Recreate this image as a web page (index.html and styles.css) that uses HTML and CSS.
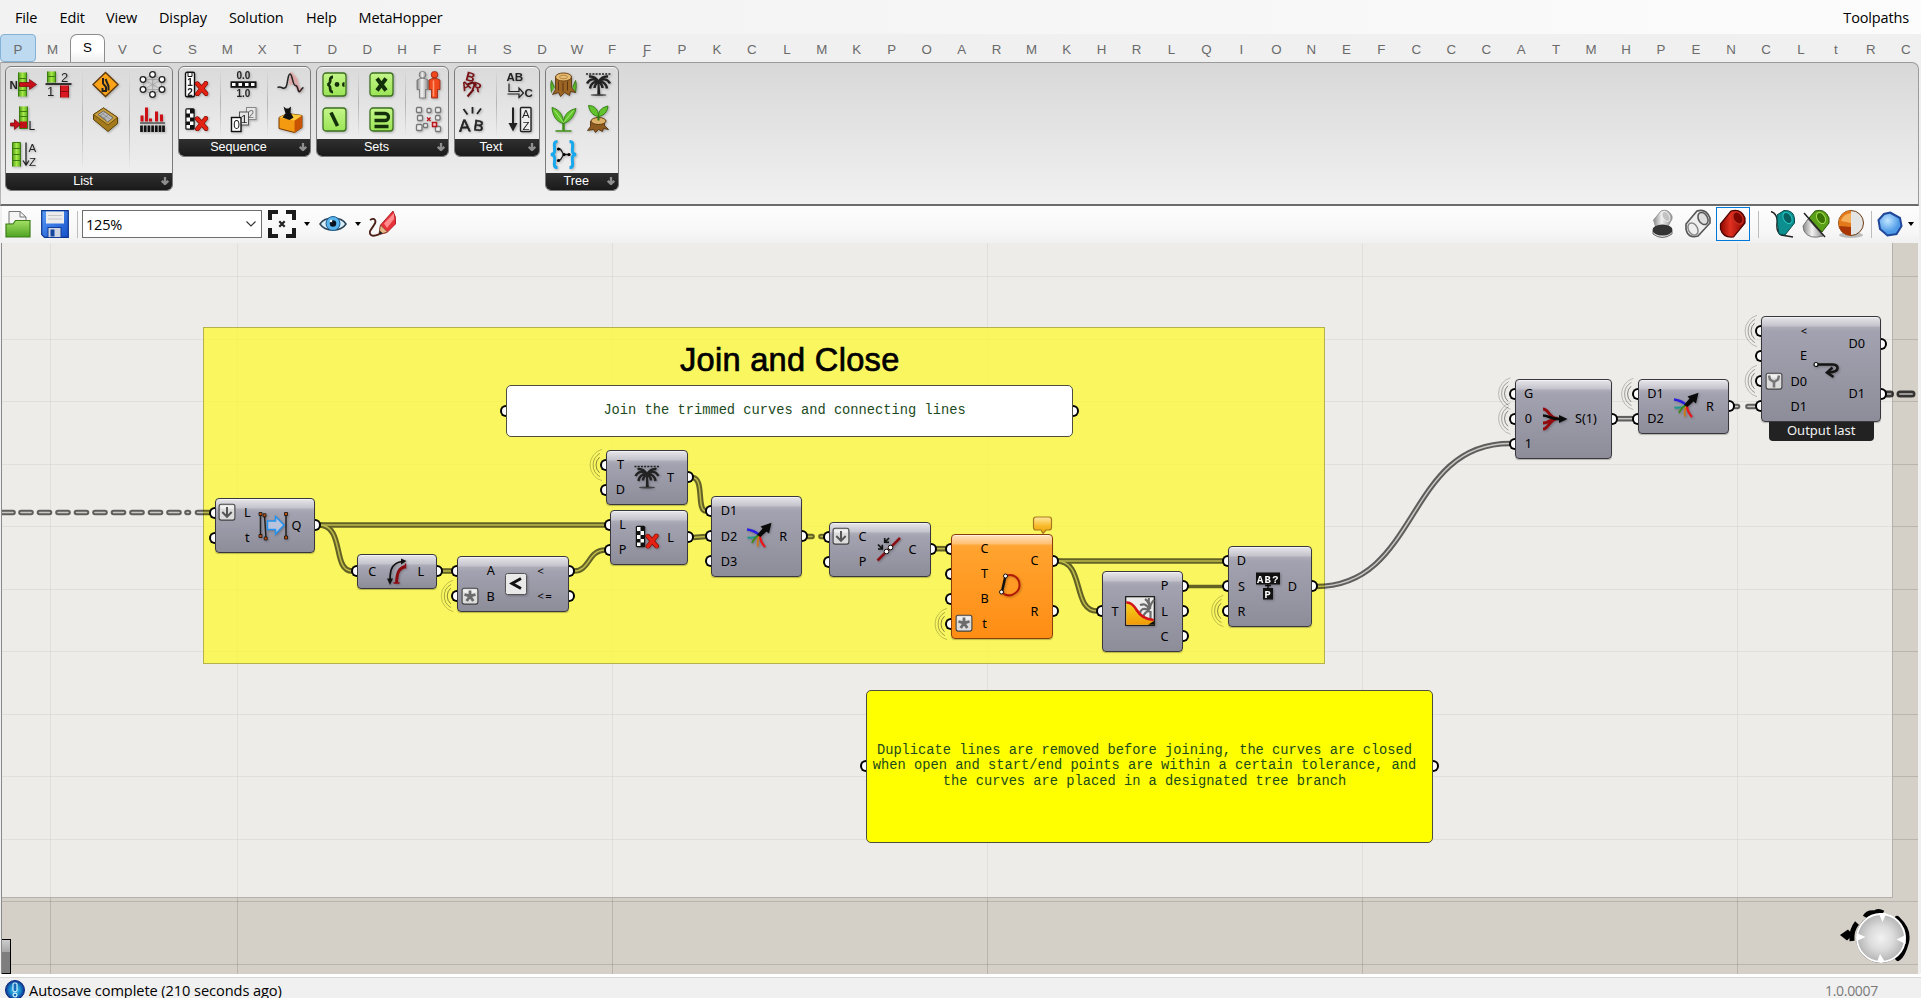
FILE: index.html
```html
<!DOCTYPE html>
<html lang="en">
<head>
<meta charset="utf-8">
<title>Toolpaths</title>
<link rel="stylesheet" href="styles.css">
</head>
<body>
<svg class="defs" aria-hidden="true">
  <defs>
    <linearGradient id="gGreen" x1="0" x2="1"><stop offset="0" stop-color="#4f9a16"/><stop offset=".5" stop-color="#a6ea48"/><stop offset="1" stop-color="#5aaa1c"/></linearGradient>
    <linearGradient id="gLime" x1="0" y1="0" x2="0" y2="1"><stop offset="0" stop-color="#c4f58a"/><stop offset="1" stop-color="#9be455"/></linearGradient>
    <linearGradient id="gFolder" x1="0" y1="0" x2="0" y2="1"><stop offset="0" stop-color="#a5e065"/><stop offset="1" stop-color="#4ea322"/></linearGradient>
    <linearGradient id="gDisk" x1="0" y1="0" x2="1" y2="1"><stop offset="0" stop-color="#5a9cf8"/><stop offset="1" stop-color="#1550c8"/></linearGradient>
    <linearGradient id="gBubble" x1="0" y1="0" x2="0" y2="1"><stop offset="0" stop-color="#ffe9a0"/><stop offset=".55" stop-color="#f8b928"/><stop offset="1" stop-color="#eda310"/></linearGradient>
    <linearGradient id="gRed" x1="0" y1="0" x2="1" y2="0"><stop offset="0" stop-color="#8d0800"/><stop offset=".4" stop-color="#e03020"/><stop offset="1" stop-color="#8a0500"/></linearGradient>
    <linearGradient id="gGrey" x1="0" x2="1"><stop offset="0" stop-color="#888"/><stop offset=".45" stop-color="#f2f2f2"/><stop offset="1" stop-color="#8d8d8d"/></linearGradient>
    <radialGradient id="gBall"><stop offset="0" stop-color="#f2f2f2"/><stop offset=".5" stop-color="#dcdcdc"/><stop offset="1" stop-color="#b4b4b4"/></radialGradient>
    <radialGradient id="gBlue" cx=".4" cy=".35"><stop offset="0" stop-color="#c2e6ff"/><stop offset="1" stop-color="#4f9be8"/></radialGradient>
    <radialGradient id="gInfo"><stop offset="0" stop-color="#55d5f5"/><stop offset=".6" stop-color="#1583c8"/><stop offset="1" stop-color="#12308c"/></radialGradient>
    <linearGradient id="gSun" x1="0" y1="0" x2="0" y2="1"><stop offset="0" stop-color="#f7d21c"/><stop offset="1" stop-color="#f09a08"/></linearGradient>
    <linearGradient id="gWire" gradientUnits="userSpaceOnUse" x1="0" y1="0" x2="2000" y2="0"><stop offset=".1015" stop-color="#c9c9c6"/><stop offset=".1015" stop-color="#bdb94a"/><stop offset=".6625" stop-color="#bdb94a"/><stop offset=".6625" stop-color="#c9c9c6"/></linearGradient>
  </defs>
  <symbol id="redx" viewBox="0 0 12 14"><path d="M2 2.5 10.3 11.8M10 2.2 2.2 12" stroke="#7a0a00" stroke-width="4.4" stroke-linecap="round"/><path d="M2 2.5 10.3 11.8M10 2.2 2.2 12" stroke="#e32213" stroke-width="3.2" stroke-linecap="round"/></symbol>
  <symbol id="cull" viewBox="0 0 26 26">
    <rect x="1.8" y="1.8" width="9.4" height="21.4" rx="1.5" fill="#111"/>
    <path d="M3 3h3.5v4H3zM6.5 7H10v4H6.5zM3 11h3.5v4H3zM6.5 15H10v3.5H6.5zM3 18.500h3.500v3.500H3z" fill="#fff"/>
    <use href="#redx" x="11" y="9.5" width="14" height="15"/>
  </symbol>
  <symbol id="palm" viewBox="0 0 26 26">
    <path d="M0.5 2.500H26" stroke="#222" stroke-width="1.500" stroke-dasharray="2 1.200"/>
    <ellipse cx="13" cy="23.5" rx="8" ry="1" fill="#222" opacity=".7"/>
    <path d="M12.2 9.500 11.800 23h3L13.800 9.500z" fill="#222"/>
    <path d="M13 10.500C9 6 4 7.500 1.500 12M13 10.500C8 9.500 5 13 4.500 17M13 10.500C10.500 12 9 14 9 16.500M13 10.500C17 6 22 7.500 24.500 12M13 10.500C18 9.500 21 13 21.500 17M13 10.500C15.500 12 17 14 17 16.500M13 10.500C10 5 7 4.500 3.500 5M13 10.500C16 5 19 4.500 22.500 5" fill="none" stroke="#222" stroke-width="2.500"/>
  </symbol>
  <symbol id="merge" viewBox="0 0 26 26">
    <g fill="none" stroke-width="1.9">
      <path d="M1 7.500C6 8 10 10 13.500 13" stroke="#2a1fe0" stroke-width="2.300"/>
      <path d="M1.500 15.500C6 16 10 15.500 13 13.500" stroke="#1d9b8e"/>
      <path d="M6 21C7.500 17 9.500 15 13 13" stroke="#3d8a14"/>
      <path d="M12 24.500C11 20 12 16.500 14 13" stroke="#c97a18"/>
      <path d="M19 25C15.500 21 14 17.500 14 13.500" stroke="#e8161c" stroke-width="2.300"/>
    </g>
    <path d="M11 13 16.500 6.500 14.500 4.500 25.500 0.800 23 11.500 20.500 9.500 14.500 15z" fill="#0a0a0a"/>
  </symbol>
  <symbol id="tag" viewBox="0 0 18 18"><rect x="1.100" y="1.300" width="15.800" height="15.800" rx="2" fill="#dcdcdc" stroke="#444" stroke-width="1.100"/><path d="M2.400 2.600h13.200v3H2.400z" fill="#f1f1f1"/></symbol>
  <symbol id="tag-down" viewBox="0 0 18 18"><use href="#tag"/><path d="M9 4v9.500M4.300 9 9 13.800 13.700 9" fill="none" stroke="#555" stroke-width="2"/></symbol>
  <symbol id="tag-star" viewBox="0 0 18 18"><use href="#tag"/><path d="M9 3.500v5.700M3.500 7.500 9 9.200M14.500 7.500 9 9.200M5.700 14 9 9.200M12.300 14 9 9.200" stroke="#6b6b6b" stroke-width="2.800"/></symbol>
  <symbol id="tag-wrench" viewBox="0 0 18 18"><use href="#tag"/><path d="M4 3.500 5 7.500 9 10 13 7.500 14 3.500M9 9.500V15.500" fill="none" stroke="#777" stroke-width="2.600"/></symbol>
  <symbol id="drop" viewBox="0 0 8 8"><path d="M4 0v7M.8 3.800 4 7 7.200 3.800" fill="none" stroke="#8f8f8f" stroke-width="2.300"/></symbol>
</svg>

<nav class="menubar">
  <span class="m-file">File</span><span class="m-edit">Edit</span><span class="m-view">View</span><span class="m-display">Display</span><span class="m-solution">Solution</span><span class="m-help">Help</span><span class="m-meta">MetaHopper</span>
  <span class="doc-name">Toolpaths</span>
</nav>

<div class="tabs">
  <b class="hot">P</b><b>M</b><b class="active">S</b><b>V</b><b>C</b><b>S</b><b>M</b><b>X</b><b>T</b><b>D</b><b>D</b><b>H</b><b>F</b><b>H</b><b>S</b><b>D</b><b>W</b><b>F</b><b>Ƒ</b><b>P</b><b>K</b><b>C</b><b>L</b><b>M</b><b>K</b><b>P</b><b>O</b><b>A</b><b>R</b><b>M</b><b>K</b><b>H</b><b>R</b><b>L</b><b>Q</b><b>I</b><b>O</b><b>N</b><b>E</b><b>F</b><b>C</b><b>C</b><b>C</b><b>A</b><b>T</b><b>M</b><b>H</b><b>P</b><b>E</b><b>N</b><b>C</b><b>L</b><b>t</b><b>R</b><b>C</b>
</div>

<section class="ribbon">
  <div class="group tall">
    <div class="cells">
      <div class="col wide">
        <svg class="ic" viewBox="0 0 26 26"><rect x="8" y="1" width="8" height="24" fill="url(#gGreen)"/><path d="M8 1v24M16 1v24M8 7h8M8 19h8" stroke="#3c7a12"/><text x="-1" y="17.500" class="t11 bold">N</text><path d="M9 11h10V8L26 13l-7 5v-3H9z" fill="#c8101a" stroke="#7a0008" stroke-width=".7"/></svg>
        <svg class="ic" viewBox="0 0 26 26"><rect x="2" y="0" width="8" height="11" fill="url(#gGreen)"/><path d="M2 0v11M10 0v11M2 5h8" stroke="#3c7a12"/><path d="M0 12.500h26" stroke="#222" stroke-width="1.800"/><rect x="15" y="14" width="8" height="12" fill="#d81820"/><path d="M15 14v12M23 14v12M15 20h8" stroke="#8a0a10"/><text x="15.500" y="10.500" class="t13">2</text><text x="1.500" y="24.500" class="t13">1</text></svg>
        <svg class="ic" viewBox="0 0 26 26"><rect x="9" y="0" width="8" height="22" fill="url(#gGreen)"/><path d="M9 0v22h8V0M9 5h8M9 10h8" fill="none" stroke="#3c7a12"/><rect x="9.500" y="15" width="7" height="6.500" fill="#c01018"/><path d="M0 16.500h4V13l6 5-6 5v-3.500H0z" fill="#c8101a" stroke="#7a0008" stroke-width=".7"/><text x="18" y="23" class="t12">L</text></svg>
        <i class="ic"></i>
        <svg class="ic" viewBox="0 0 26 26"><rect x="2" y="1" width="8" height="24" fill="url(#gGreen)"/><path d="M2 25V1h8v24M2 7h8M2 13h8M2 19h8" fill="none" stroke="#3c7a12"/><path d="M15.500 1v22M12.500 19l3 4.500 3-4.500" fill="none" stroke="#222" stroke-width="1.300"/><text x="18" y="10.500" class="t11">A</text><text x="18.500" y="24.500" class="t11">Z</text></svg>
      </div>
      <div class="col">
        <svg class="ic" viewBox="0 0 26 26"><path d="M13 1 25.500 13 13 25 .5 13z" fill="#fba41a" stroke="#5e3606" stroke-width="1.300"/><path d="M10.500 6.500v5.500l3 3.500v4h-3.500v-3M13 7.500l3 7v4.500" stroke="#222" stroke-width="2" fill="none"/></svg>
        <svg class="ic" viewBox="0 0 26 26"><path d="M1 8 11 1.500 25 11v6L15.500 25 1 13z" fill="#a47a1c" stroke="#5c4208"/><path d="M1 8 11 1.500 25 11 15.500 18.500z" fill="#c79d3c" stroke="#5c4208" stroke-width=".8"/><path d="M5.500 8 11 4.500 20.500 11.200 15.300 15.500z" fill="#bbb" stroke="#555" stroke-width=".8"/><path d="M8 9 14 13M10 7.500 17 12M7 9.500 13 5.500M11 12 16 8" stroke="#777" stroke-width=".6"/></svg>
      </div>
      <div class="col">
        <svg class="ic" viewBox="0 0 26 26"><path d="M13 3v20M4 8l18 10M22 8 4 18M13 3 4 8v10l9 5 9-5V8zM4 8h18M4 18h18" fill="none" stroke="#999" stroke-width=".7"/><g fill="#fff" stroke="#222" stroke-width="1.300"><circle cx="13" cy="3" r="2.800"/><circle cx="3.500" cy="8" r="2.800"/><circle cx="22.500" cy="8" r="2.800"/><circle cx="3.500" cy="18" r="2.800"/><circle cx="22.500" cy="18" r="2.800"/><circle cx="13" cy="23" r="2.800"/></g></svg>
        <svg class="ic" viewBox="0 0 26 26"><path d="M2.500 9v6M7 1v14M11 12v3M17 5v10M22 8v7" stroke="#cc1016" stroke-width="3"/><path d="M.5 16.500h25" stroke="#333" stroke-width="1.200"/><path d="M2 19v6.500M5.700 19v6.500M9.400 19v6.500M13.100 19v6.500M16.800 19v6.500M20.500 19v6.500M24 19v6.500" stroke="#111" stroke-width="2.700"/></svg>
      </div>
    </div>
    <div class="cap"><span>List</span><svg class="dr"><use href="#drop"/></svg></div>
  </div>

  <div class="group">
    <div class="cells">
      <div class="col">
        <svg class="ic" viewBox="0 0 26 26"><rect x="2" y="0.800" width="9" height="24.500" rx="1.500" fill="#fff" stroke="#111" stroke-width="1.400"/><path d="M4.500 1v4h4V1" fill="none" stroke="#111"/><text x="3.700" y="14.800" class="t10 bold">1</text><text x="3.700" y="24" class="t10 bold">2</text><use href="#redx" x="11" y="9.500" width="14" height="15"/></svg>
        <svg class="ic" viewBox="0 0 26 26"><use href="#cull"/></svg>
      </div>
      <div class="col">
        <svg class="ic" viewBox="0 0 26 26"><text x="6" y="7.500" class="t10 bold">0.0</text><rect x="0" y="9.800" width="26" height="6.500" fill="#111"/><path d="M1.500 11.500h3.500v3h-3.500zM8 11.500h3.500v3H8zM14.500 11.500H18v3h-3.500zM20.500 11.500H24v3h-3.500z" fill="#fff"/><text x="6" y="25.500" class="t10 bold">1.0</text></svg>
        <svg class="ic" viewBox="0 0 26 26"><g fill="#e6e6e6"><rect x="16" y="1" width="9.500" height="12" stroke="#888"/><rect x="9" y="5.500" width="9" height="13" stroke="#555"/><rect x="1" y="11" width="9.500" height="14" fill="#fff" stroke="#111" stroke-width="1.400"/></g><text x="18" y="11" class="t10" opacity=".6">2</text><text x="10.500" y="16.500" class="t11">1</text><text x="2.700" y="22.500" class="t12">0</text></svg>
      </div>
      <div class="col">
        <svg class="ic" viewBox="0 0 26 26"><path d="M13 13 14.500 4 18 8l2 8 4 4" fill="none" stroke="#f59a9a" stroke-width="4" opacity=".6"/><path d="M0 16C4 14 6 19 8.500 15.500 10.500 12 10 2.500 12.500 2.500S15 14 18 14s2 7 4 6 2-3.500 4-4" fill="none" stroke="#222" stroke-width="1.500"/></svg>
        <svg class="ic" viewBox="0 0 26 26"><path d="M1.500 11 10 7l14.500 2v12L17 26 1.500 22z" fill="#f39a10" stroke="#7b3a00"/><path d="M17 14 24.500 9v12L17 26z" fill="#c85404"/><path d="M1.500 11 10 7l14.500 2L17 14z" fill="#ffc93c"/><path d="M6 0 8.500 2h2.500L13.500 0 13 6l3 5-4 2.500L5 11l3-4z" fill="#111"/></svg>
      </div>
    </div>
    <div class="cap"><span>Sequence</span><svg class="dr"><use href="#drop"/></svg></div>
  </div>

  <div class="group">
    <div class="cells">
      <div class="col">
        <svg class="ic" viewBox="0 0 26 26"><rect class="set" x="1.500" y="1.500" width="23" height="23" rx="3"/><path d="M11.500 5.500C8 5.500 9 8 8.500 10.500 8 12.500 6 13 6 13s2 .5 2.500 2.500C9 18 8 20.500 11.500 20.500" fill="none" stroke="#14300a" stroke-width="2.800"/><circle cx="15.500" cy="13" r="2.400" fill="#14300a"/><path d="M23 10.500a2.500 2.500 0 000 5" fill="#14300a"/></svg>
        <svg class="ic" viewBox="0 0 26 26"><rect class="set" x="1.500" y="1.500" width="23" height="23" rx="3"/><path d="M9.500 6 16 19.500" stroke="#14300a" stroke-width="3.600"/></svg>
      </div>
      <div class="col">
        <svg class="ic" viewBox="0 0 26 26"><rect class="set" x="1.500" y="1.500" width="23" height="23" rx="3"/><path d="M8.500 7 17.500 19M17.500 7 8.500 19" stroke="#14300a" stroke-width="4"/></svg>
        <svg class="ic" viewBox="0 0 26 26"><rect class="set" x="1.500" y="1.500" width="23" height="23" rx="3"/><path d="M6 7h10.500a3.500 3.500 0 010 7H6M6 20h14" fill="none" stroke="#14300a" stroke-width="3.300"/></svg>
      </div>
      <div class="col">
        <svg class="ic" viewBox="0 0 26 26"><g fill="url(#gGrey)" stroke="#666" stroke-width=".7"><circle cx="7" cy="3.200" r="3.300"/><path d="M1.500 8.500Q7 5 12.500 8.500V18H10v8.500H4V18H1.500z"/></g><g fill="#f0481c" stroke="#8a1c04" stroke-width=".7"><circle cx="19" cy="3.200" r="3.300"/><path d="M13.500 8.500Q19 5 24.500 8.500V18H22v8.500h-6V18h-2.500z"/></g><path d="M18 9v16" stroke="#ff9a70" stroke-width="1.600"/></svg>
        <svg class="ic" viewBox="0 0 26 26"><g fill="#eee" stroke="#777" stroke-width="1.300"><rect x="1" y="1" width="5" height="5" rx="1"/><rect x="11.500" y="2" width="4" height="4" rx="1"/><rect x="20" y="1" width="5" height="5" rx="1"/><rect x="2" y="9" width="5" height="5" rx="1"/><rect x="1" y="18" width="5.500" height="6" rx="1"/><rect x="8" y="17" width="4" height="4" rx="1"/><rect x="20" y="9" width="4.500" height="4.500" rx="1"/><rect x="20" y="20" width="5" height="5" rx="1"/></g><rect x="17" y="16" width="4" height="4" fill="#f8d0d0" stroke="#b8141c" stroke-width="1.500"/><path d="M11.500 11l3.500 3.500M15 11l-3.500 3.500" stroke="#b8141c" stroke-width="1.200"/></svg>
      </div>
    </div>
    <div class="cap"><span>Sets</span><svg class="dr"><use href="#drop"/></svg></div>
  </div>

  <div class="group">
    <div class="cells">
      <div class="col">
        <svg class="ic" viewBox="0 0 26 26"><g class="maroon"><text x="6" y="10" class="t13 bold" transform="rotate(15 11 6)">B</text><text x="2" y="19" class="t13 bold" transform="rotate(-25 6 15)">A</text><text x="12" y="20" class="t13 bold" transform="rotate(20 17 17)">R</text><path d="M8 13 13 11l4 3M8 25l6-7" fill="none" stroke="#6a0e12" stroke-width="2"/></g></svg>
        <svg class="ic" viewBox="0 0 26 26"><text x="-.5" y="25" class="t17 stout" transform="rotate(-3 5 20)">A</text><text x="14" y="24" class="t16 stout" transform="rotate(8 18 20)">B</text><path d="M4 2.500 8 8M13 .5V7M21.500 2 17.500 7.500" stroke="#222" stroke-width="1.800"/></svg>
      </div>
      <div class="col">
        <svg class="ic" viewBox="0 0 26 26"><text x="0" y="9.500" class="t11 bold">AB</text><path d="M2.500 12v8h10v-3.500l4.500 5-4.500 4.500v-3.500H1" fill="none" stroke="#222" stroke-width="1.200"/><text x="18" y="25" class="t11 bold">C</text></svg>
        <svg class="ic" viewBox="0 0 26 26"><path d="M6.500 1v20" stroke="#222" stroke-width="2"/><path d="M2 16.500h9L6.500 25z" fill="#222"/><rect x="14" y="1" width="10.500" height="24" rx="1" fill="#eee" stroke="#222" stroke-width="1.400"/><text x="15.600" y="11" class="t11">A</text><text x="16" y="23" class="t11">Z</text></svg>
      </div>
    </div>
    <div class="cap"><span>Text</span><svg class="dr"><use href="#drop"/></svg></div>
  </div>

  <div class="group tall tree">
    <div class="cells">
      <div class="col wide">
        <svg class="ic" viewBox="0 0 26 26"><path d="M1 21C0 15 0 12 1 9l3 7M25 21c1-6 1-9 0-12l-3 7" fill="#5db52a" stroke="#2c6a10" stroke-width=".8"/><path d="M5 5v13L2 23l6-2 2 4 4-4 5 3 1-4 5 1-4-5V5z" fill="#9c6524" stroke="#4d2b08" stroke-width=".8"/><path d="M8 10v9M12.500 11v9M17 10v9" stroke="#5b3610"/><ellipse cx="13" cy="5.500" rx="8" ry="4" fill="#e7bc74" stroke="#6d430f"/><ellipse cx="13" cy="5.500" rx="4" ry="1.800" fill="none" stroke="#a97a35" stroke-width=".8"/></svg>
        <svg class="ic" viewBox="0 0 26 26"><use href="#palm"/></svg>
        <svg class="ic" viewBox="0 0 26 26"><path d="M13 24V15" stroke="#3b8d14" stroke-width="2.400"/><path d="M13 17C5 15 2 8 1.500 1 9 3 13 9 13 17zM13 17c0-8 4-13 12.500-15C24 9 20 15 13 17z" fill="#62c32c" stroke="#2e7a10" stroke-width=".9"/><path d="M4 4l9 12L23 4" fill="none" stroke="#b3ee84" stroke-width=".9"/><path d="M5 24.500h16" stroke="#3b8d14" stroke-width="1.500"/></svg>
        <svg class="ic" viewBox="0 0 26 26"><path d="M5 15v5l-3 4 6-1 2 3 3-3 4 2 1-3 5 1-4-4v-5z" fill="#8d5a20" stroke="#4a2806" stroke-width=".8"/><ellipse cx="13" cy="14.500" rx="7.500" ry="3.500" fill="#deb068" stroke="#5f3a0d"/><path d="M13 14V8" stroke="#2e7a10" stroke-width="2"/><path d="M13 10C7 9 4 5 3-1c6 0 10 4 10 11zM13 10c0-7 4-9 9.500-10.500C22 5 19 9 13 10z" fill="#62c32c" stroke="#2e7a10" stroke-width=".9"/></svg>
        <svg class="ic" viewBox="0 0 26 26"><path d="M7 0C1.500 0 5 6.500 4 10.500 3.500 12.500 .5 13 .5 13s3 .5 3.500 2.500C5 19.500 1.500 26 7 26M19 0c5.500 0 2 6.500 3 10.500.5 2 3.500 2.500 3.500 2.500s-3 .5-3.500 2.500C21 19.500 24.500 26 19 26" fill="none" stroke="#18a8ee" stroke-width="3"/><path d="M8 7c4 0 3 5.500 6 6M8 19c4 0 3-5.500 6-6h4" fill="none" stroke="#222" stroke-width="1.300"/><circle cx="8" cy="7.500" r="1.600"/><circle cx="8" cy="19" r="1.600"/><circle cx="13.500" cy="13" r="1.600"/><circle cx="18.500" cy="13" r="1.600"/></svg>
      </div>
    </div>
    <div class="cap"><span>Tree</span><svg class="dr"><use href="#drop"/></svg></div>
  </div>
</section>

<div class="toolbar">
  <svg class="tb open" viewBox="0 0 26 28"><path d="M4 14V1.500h11L21 7v8z" fill="#f5f5f5" stroke="#777"/><path d="M15 1.500V7h6" fill="none" stroke="#777"/><path d="M1 27V14h7l2.500-3.500H25V27z" fill="url(#gFolder)" stroke="#3b7e18" stroke-width="1.200"/></svg>
  <svg class="tb save" viewBox="0 0 28 28"><path d="M.7.700h26.600v26.600H3.500L.7 24.500z" fill="url(#gDisk)" stroke="#0b358c" stroke-width="1.200"/><rect x="5" y="1.500" width="18" height="12" fill="#ececec"/><path d="M7 5.500h14M7 9h14" stroke="#c5c5c5"/><rect x="7" y="17.500" width="13" height="10" fill="#cfd6e2" stroke="#123d98"/><rect x="9.500" y="19.500" width="4" height="7" fill="#14469f"/></svg>
  <i class="sep"></i>
  <div class="zoombox"><span>125%</span><svg viewBox="0 0 10 6"><path d="M.5.500 5 5 9.500.500" fill="none" stroke="#333" stroke-width="1.100"/></svg></div>
  <svg class="tb fit" viewBox="0 0 28 28"><path d="M2 10V2h8M18 2h8v8M26 18v8h-8M10 26H2v-8" fill="none" stroke="#1b1b1b" stroke-width="4"/><path d="M11.300 11.300l5.400 5.400M16.700 11.300l-5.400 5.400" stroke="#222" stroke-width="2.200"/></svg>
  <i class="arrow a1"></i>
  <svg class="tb eye" viewBox="0 0 28 20"><path d="M1 10C6 2 22 2 27 10 22 18 6 18 1 10z" fill="#d9effa" stroke="#2a4458" stroke-width="1.500"/><circle cx="14" cy="9.500" r="7" fill="#58b4ea" stroke="#1b5c90"/><circle cx="14" cy="9.500" r="3.200" fill="#0a1420"/><circle cx="12" cy="7" r="1.300" fill="#fff"/></svg>
  <i class="arrow a2"></i>
  <svg class="tb pen" viewBox="0 0 28 28"><path d="M2 10C7 7 9 11 6 15c-3 5-6 7-3 10 3 2 6 0 9-1" fill="none" stroke="#4a2018" stroke-width="1.800"/><path d="M11 24.500 12.500 15 25 1Q29 8 27.500 14L19 22.500z" fill="#e8323a" stroke="#a01018" stroke-width=".8"/><path d="M16 13.500 26 3v6L19 18z" fill="#ff8d8d"/><path d="M11 24.500 12.500 15l7 7z" fill="#e6b888" stroke="#7a3a20" stroke-width=".7"/><path d="M11 24.500l.6-4 3.400 3z" fill="#222"/></svg>
  <div class="right-tools">
    <svg class="tb p1" viewBox="0 0 28 30"><path d="M4.500 11 12 2Q19-1 23 7v3L18 19H7z" fill="url(#gGrey)" stroke="#999"/><ellipse cx="17" cy="7.500" rx="3.300" ry="5.300" transform="rotate(-30 17 7.500)" fill="#c2c2c2" stroke="#eee"/><path d="M4 22v3q9 7 19 0v-3z" fill="#ddd" stroke="#666"/><ellipse cx="13.500" cy="21" rx="10" ry="5.500" fill="#343434"/></svg>
    <svg class="tb p2" viewBox="0 0 28 30"><path d="M2 15 13 2Q22-1 26 9v5L14 27Q4 30 2 20z" fill="#eee" stroke="#555" stroke-width="1.600"/><ellipse cx="19" cy="9.500" rx="4.500" ry="6.500" transform="rotate(-30 19 9.500)" fill="#ddd" stroke="#555" stroke-width="1.500"/><ellipse cx="9" cy="20" rx="4.500" ry="6.500" transform="rotate(-30 9 20)" fill="none" stroke="#888" stroke-width="1.500"/></svg>
    <span class="picked"><svg class="tb" viewBox="0 0 28 30"><path d="M1.500 15 12 2Q22-1 26 9v5L14.500 28Q4 29 1.500 20z" fill="url(#gRed)" stroke="#4d0400" stroke-width="1.200"/><ellipse cx="19" cy="9" rx="4.500" ry="6.500" transform="rotate(-30 19 9)" fill="#7c0500" stroke="#c83020" stroke-width="1.200"/></svg></span>
    <i class="sep s1"></i>
    <svg class="tb p4" viewBox="0 0 28 30"><path d="M2 2.500Q9 5 8 14T12 26l12 2" fill="none" stroke="#222" stroke-width="1.400"/><path d="M8 6 15 1.500Q25 1 25.500 10v4L16 26l-6-1Q8 15 8 6z" fill="#0d8f8f" stroke="#054c4c"/><ellipse cx="18.500" cy="9" rx="4" ry="6" transform="rotate(-30 18.500 9)" fill="#076060" stroke="#25c5c0"/></svg>
    <svg class="tb p5" viewBox="0 0 28 30"><path d="M1 17 6 10 21 27Q7 31 2 22z" fill="url(#gGrey)" stroke="#777"/><path d="M7 9 13 2Q23-1 27 9v5L20 23z" fill="#5aa018" stroke="#2c5606"/><ellipse cx="19" cy="9" rx="4" ry="6" transform="rotate(-30 19 9)" fill="#3a7404" stroke="#a5dc50"/><path d="M2 4 23 28" stroke="#222" stroke-width="1.500"/></svg>
    <svg class="tb p6" viewBox="0 0 28 30"><ellipse cx="14" cy="26" rx="12" ry="3" fill="#bbb"/><circle cx="14" cy="14" r="12.500" fill="#e4e4e4" stroke="#6b3a12"/><path d="M14 1.500a12.500 12.500 0 000 25z" fill="#e27a1c"/><path d="M14 18v8.500C8 26.500 3 23 2 17z" fill="#a83606"/><path d="M14 4Q6 5 4 12l10 2z" fill="#f5b05c"/></svg>
    <i class="sep s2"></i>
    <svg class="tb p7" viewBox="0 0 28 30"><path d="M14 3.500 24 9l1.500 8-5 8-9 1.500L4 20 2.500 11 8 5z" fill="url(#gBlue)" stroke="#20479a" stroke-width="2"/></svg>
    <i class="arrow a3"></i>
  </div>
</div>

<main class="canvas">
  <div class="page"></div>
  <div class="join-group"><h1>Join and Close</h1></div>

  <svg class="wires" viewBox="2 243 1916 731" width="1916" height="731">
    <defs>
      <g id="dbl">
        <path d="M319 525H605"/><path d="M319 525C345 525 332 571 352 571"/><path d="M442 571H452"/>
        <path d="M574 571C590 571 588 550 605 550"/><path d="M692 477.500C705 477.500 696 511 706 511"/>
        <path d="M693 537.500 706 536.500"/><path d="M935 548.700H946"/><path d="M1057 561H1223"/>
        <path d="M1057 561C1085 561 1072 611 1097 611"/><path d="M1316 586.500C1420 586.500 1405 443.500 1510 443.500"/><path d="M1616 418.700H1633"/>
      </g>
      <g id="dash"><path d="M2 512.500H13M21 512.500H31M39.500 512.500H49.500M58 512.500H68M76.500 512.500H86.500M95 512.500H105M113.500 512.500H123.500M132 512.500H142M150.500 512.500H160.500M169 512.500H179M197.500 512.500H210M187 512.500H188.500"/><path d="M806 536.500H812M821 536.500H825M1733 406.500H1737.500M1748 406.500H1756"/></g>
      <g id="last"><path d="M1885 394H1890.500M1900 394H1912"/></g>
      <g id="air"><path d="M-7-7.800A10.500 10.500 0 0 0-7 7.800" stroke-opacity=".45"/><path d="M-6.500-11.700A13.400 13.400 0 0 0-6.500 11.700" stroke-opacity=".33"/><path d="M-4.500-15.700A16.300 16.300 0 0 0-4.500 15.700" stroke-opacity=".22"/></g>
    </defs>
    <use href="#dbl" class="w-dark"/><use href="#dbl" class="w-light"/>
    <path d="M1187 586.500H1223" class="w-single"/>
    <use href="#dash" class="w-dark round"/><use href="#dash" class="w-light round"/>
    <use href="#last" class="w-dark round heavy"/><use href="#last" class="w-mid round"/>
    <g fill="none" stroke="#000" stroke-width="1">
      <use href="#air" x="606.500" y="465"/><use href="#air" x="457.700" y="596"/><use href="#air" x="951.500" y="624"/><use href="#air" x="1228" y="611"/>
      <use href="#air" x="1515" y="393.500"/><use href="#air" x="1515" y="418.500"/><use href="#air" x="1638" y="394"/><use href="#air" x="1761.500" y="331"/><use href="#air" x="1761.500" y="381"/>
    </g>
    <path d="M1036 517h13q2.500 0 2.500 2.500v8q0 2.500-2.500 2.500h-3l-3 3.500-2-3.500h-5q-2.500 0-2.500-2.500v-8q0-2.500 2.500-2.500z" fill="url(#gBubble)" stroke="#a9781a" stroke-width="1.200"/>
  </svg>

  <div class="panel white"><p>Join the trimmed curves and connecting lines</p></div>
  <div class="panel yellow"><p>Duplicate lines are removed before joining, the curves are closed<br>when open and start/end points are within a certain tolerance, and<br>the curves are placed in a designated tree branch</p></div>

  <div class="node n1"><ul class="in tagged"><li><svg class="tg"><use href="#tag-down"/></svg>L</li><li>t</li></ul>
    <svg class="ni" viewBox="0 0 30 30"><path d="M3.500 4v23M7.500 5 9 28M29 4v23" stroke="#222" stroke-width="1.500"/><path d="M10.500 11h8V6.500L27 15 18.500 24v-4.500h-8z" fill="#b9c4dc" stroke="#2492ee" stroke-width="1.500"/><path d="M2 2.500h3v3H2zM6 3.800h3v3H6zM2 24.500h3v3H2zM7.200 27h3v3h-3zM27.500 2.500h3v3h-3zM27.500 26h3v3h-3z" fill="#c0500c" stroke="#111" stroke-width=".8"/></svg>
    <ul class="out"><li>Q</li></ul></div>
  <div class="node n2"><ul class="in"><li>C</li></ul>
    <svg class="ni" viewBox="0 0 30 30"><path d="M6 24C6 12 9 7 18 5.500" fill="none" stroke="#111" stroke-width="1.700"/><path d="M3 22.500h6L6 29zM17 2.500v6L22.500 5z" fill="#111"/><path d="M12.500 27C13 16 15 12.500 21 10.500" fill="none" stroke="#8a0a10" stroke-width="3"/><path d="M9.500 27h6M21.500 7.500v5" stroke="#8a0a10" stroke-width="1.500"/></svg>
    <ul class="out"><li>L</li></ul></div>
  <div class="node n3"><ul class="in tagged"><li>A</li><li><svg class="tg"><use href="#tag-star"/></svg>B</li></ul>
    <svg class="ni" viewBox="0 0 30 30"><rect x="4.500" y="4.500" width="21" height="21" rx="2" fill="#e9e9e9" stroke="#555"/><path d="M20 9.500 11 14.500 20 19.500" fill="none" stroke="#111" stroke-width="2.900"/></svg>
    <ul class="out cmp"><li>&lt;</li><li>&lt;=</li></ul></div>
  <div class="node n4"><ul class="in"><li>T</li><li>D</li></ul><svg class="ni" viewBox="-2 0 30 26"><use href="#palm" width="26" height="26"/></svg><ul class="out"><li>T</li></ul></div>
  <div class="node n5"><ul class="in"><li>L</li><li>P</li></ul><svg class="ni" viewBox="-2 -2 30 30"><use href="#cull" width="26" height="26"/></svg><ul class="out"><li>L</li></ul></div>
  <div class="node n6"><ul class="in"><li>D1</li><li>D2</li><li>D3</li></ul><svg class="ni" viewBox="-2 -1 30 30"><use href="#merge" width="26" height="26"/></svg><ul class="out"><li>R</li></ul></div>
  <div class="node n7"><ul class="in tagged"><li><svg class="tg"><use href="#tag-down"/></svg>C</li><li>P</li></ul>
    <svg class="ni" viewBox="0 0 30 30"><path d="M3.500 26.500 26 4" stroke="#8a1016" stroke-width="2.500"/><circle cx="12.500" cy="17.500" r="2.300" fill="#fff" stroke="#111"/><circle cx="16.500" cy="13.500" r="2.300" fill="#fff" stroke="#111"/><path d="M4 10.500 8 14.500M8.300 10.800V15H4M15 4 11 8M10.700 4V8.200H15" fill="none" stroke="#111" stroke-width="1.600"/></svg>
    <ul class="out"><li>C</li></ul></div>
  <div class="node n8 warn"><ul class="in tagged"><li>C</li><li>T</li><li>B</li><li><svg class="tg"><use href="#tag-star"/></svg>t</li></ul>
    <svg class="ni" viewBox="0 0 30 30"><path d="M10.500 5C19 1.500 25 8 24.500 15S14 28 7 21.500" fill="none" stroke="#b01808" stroke-width="2"/><path d="M10.500 5 7 20.500" stroke="#111" stroke-width="2.500"/><circle cx="10.500" cy="5" r="2" fill="#fff" stroke="#111"/><circle cx="6.500" cy="21" r="2" fill="#fff" stroke="#111"/></svg>
    <ul class="out"><li>C</li><li>R</li></ul></div>
  <div class="node n9"><ul class="in"><li>T</li></ul>
    <svg class="ni" viewBox="0 0 30 30"><rect x=".7" y=".7" width="28.600" height="28.600" fill="#ececec" stroke="#111" stroke-width="1.200"/><path d="M25.500 28V15M24.500 15C19 11 16 13 15 17M24.500 14C21 7 18 8 15 9M24.500 13C24.500 8 23 5 20 3M25 13c0-4 2-7 4-9M24.500 15c-3 0-6 3-6 6M25 11c-1-4-2-6-1-9" fill="none" stroke="#6b6b6b" stroke-width="2.200"/><path d="M1.300 7Q7 6 12 15T28.700 24.500V28.700H1.300z" fill="url(#gSun)"/><path d="M1.300 6.500Q7 6 12 14.500T28.700 24" fill="none" stroke="#d3121a" stroke-width="2.600"/><path d="M23 28.700 29 25v3.700z" fill="#111"/></svg>
    <ul class="out"><li>P</li><li>L</li><li>C</li></ul></div>
  <div class="node n10"><ul class="in"><li>D</li><li>S</li><li>R</li></ul>
    <svg class="ni" viewBox="0 0 30 30"><rect x="3" y="1.500" width="24" height="12" fill="#111"/><text x="4" y="11.500" textLength="21.500" class="inv">AB?</text><path d="M15 13v5M12 14.500h6" stroke="#111" stroke-width="1.500"/><rect x="10" y="17" width="10" height="11.500" fill="#111"/><text x="11.500" y="26.800" class="inv">P</text></svg>
    <ul class="out"><li>D</li></ul></div>
  <div class="node n11"><ul class="in"><li>G</li><li>0</li><li>1</li></ul>
    <svg class="ni" viewBox="0 0 30 30"><path d="M3 5C9 5 9 14.500 18 14.500M3 19C9 19 9 15 18 14.500M3 25C9 25 9 15 18 14.500" fill="none" stroke="#930a0e" stroke-width="2.800"/><path d="M3 11.500C9 11.500 10 15 20 15" fill="none" stroke="#0a0a0a" stroke-width="2.600"/><path d="M19 11l8.500 4-8.500 4z" fill="#0a0a0a"/></svg>
    <ul class="out"><li>S(1)</li></ul></div>
  <div class="node n12"><ul class="in"><li>D1</li><li>D2</li></ul><svg class="ni" viewBox="-2 -1 30 30"><use href="#merge" width="26" height="26"/></svg><ul class="out"><li>R</li></ul></div>
  <div class="node n13"><ul class="in"><li class="lt">&lt;</li><li>E</li><li><svg class="tg"><use href="#tag-wrench"/></svg>D0</li><li>D1</li></ul>
    <svg class="ni" viewBox="0 0 30 30"><path d="M5 10.500H21Q26 11 25.500 14.500T17 18.500" fill="none" stroke="#151515" stroke-width="2.600"/><path d="M20.500 13.500 15 18.500l6.500 4.500" fill="none" stroke="#151515" stroke-width="2.600"/><circle cx="4" cy="10.500" r="2" fill="#fff" stroke="#111" stroke-width="1.200"/></svg>
    <ul class="out"><li>D0</li><li>D1</li></ul></div>
  <div class="note">Output last</div>

  <div class="stub"></div>
  <svg class="compass" viewBox="0 0 74 58" width="74" height="58">
    <path d="M2 27 10 21.500 15 27 9 32.500z"/><path d="M14 33Q13 22 19 15" fill="none" stroke="#000" stroke-width="5"/><path d="M27 9Q30 4 37 5Q40 2 45 5" fill="none" stroke="#000" stroke-width="5"/><path d="M59 11Q71 22 68 34T60 50" fill="none" stroke="#000" stroke-width="6" stroke-linecap="round"/>
    <circle cx="43" cy="30" r="25" fill="#555"/><circle cx="43" cy="30" r="24" fill="url(#gBall)" stroke="#fff" stroke-width="1.800"/>
    <path d="M40.500 5h8l-4 9zM18.500 25v8l9-4zM67.500 27v9l-9-4.500zM39 54h8L42 46z" fill="#fff"/>
  </svg>
</main>

<footer class="status">
  <svg class="info" viewBox="0 0 20 20"><circle cx="10" cy="10" r="9.500" fill="url(#gInfo)" stroke="#0d2a80"/><rect x="8" y="3" width="4" height="8.500" rx="1.500" fill="#1768b8" stroke="#cdf0ff" stroke-width="1.200"/><circle cx="10" cy="15" r="1.900" fill="#1768b8" stroke="#cdf0ff" stroke-width="1.200"/></svg>
  <span class="msg">Autosave complete (210 seconds ago)</span>
  <span class="ver">1.0.0007</span>
</footer>
</body>
</html>
```

FILE: styles.css
```css
*, *::before, *::after { box-sizing: border-box; }
html, body { margin: 0; height: 100%; }
body {
  width: 1921px; height: 998px; overflow: hidden;
  display: flex; flex-direction: column;
  background: #f0f0f0; color: #000;
  font-family: "Open Sans", "Noto Sans", sans-serif; font-size: 14px;
}
ul { list-style: none; margin: 0; padding: 0; }
.defs { position: absolute; width: 0; height: 0; }

/* menu */
.menubar {
  height: 34px; flex: none; display: flex; align-items: center;
  padding: 0 12px 0 15px; font-size: 14.5px; letter-spacing: -.15px;
  background: linear-gradient(90deg, #f2f2f2, #f5f5f5 45%, #fcfcfc);
  white-space: nowrap;
}
.m-file { width: 44.5px; } .m-edit { width: 46.5px; } .m-view { width: 53px; }
.m-display { width: 70px; } .m-solution { width: 77px; } .m-help { width: 52.5px; }
.doc-name { margin-left: auto; }

/* category tabs */
.tabs { height: 28px; flex: none; display: flex; background: #f0f0f0; overflow: hidden; }
.tabs b {
  width: 34.98px; flex: none; height: 28px; text-align: center;
  font: 400 13.3px/31px "Liberation Sans", Arial, sans-serif; color: #6a6a6a;
}
.tabs .hot { width: 36px; margin-right: -1px; background: #bedaf0; border: 1px solid #84b2d4; border-radius: 4px; line-height: 29px; }
.tabs .active {
  color: #000; border: 1px solid #8c8c8c; border-bottom: 0; border-radius: 7px 7px 0 0;
  background: linear-gradient(#fff 60%, #eee); line-height: 25px;
}

/* ribbon */
.ribbon {
  height: 144px; flex: none; display: flex; align-items: flex-start; gap: 5px;
  margin-right: 2px; padding: 3px 0 0 3.5px;
  border: 1px solid #9a9a9a; border-left-color: #b5b5b5; border-radius: 0 7px 0 0;
  border-bottom: 2px solid #6c6c6c;
  background: linear-gradient(#d8d8d8, #f1f1f1);
}
.group { height: 91px; display: flex; flex-direction: column; border-radius: 6px; border: 1px solid #7b7b7b; overflow: hidden; background: linear-gradient(#dadada, #f1f1f1); box-shadow: inset 0 1px #f8f8f8; }
.group.tall { height: 125px; }
.cells { flex: 1; display: flex; }
.col { width: 47px; padding-right: 12px; display: flex; flex-wrap: wrap; align-content: flex-start; position: relative; }
.col.wide { width: 82px; }
.col:last-child { width: 37px; padding-right: 2px; }
.tree .col.wide { width: 72.5px; padding-right: 2px; }
.col:not(:last-child)::after { content: ""; position: absolute; right: 5px; top: 2px; bottom: 2px; width: 1px; background: linear-gradient(transparent, #b4b4b4, transparent); }
.ic { width: 35px; height: 35px; padding: 4.5px; display: block; overflow: visible; filter: drop-shadow(1px 1px 1px rgba(0,0,0,.25)); }
.ic text { font-family: "Liberation Sans", Arial, sans-serif; fill: #222; }
.t10 { font-size: 10px; } .t11 { font-size: 11.5px; } .t12 { font-size: 12px; } .t13 { font-size: 13px; } .t16 { font-size: 15px; } .t17 { font-size: 17px; }
.bold { font-weight: 700; }
.stout { stroke: #222; stroke-width: .6; }
.ic .maroon text { fill: #7a1216; }
.set { fill: url(#gLime); stroke: #3c7020; stroke-width: 1.3; }
.cap { height: 17px; flex: none; display: flex; align-items: center; background: linear-gradient(#303030, #1a1a1a); color: #fff; font: 12.6px "Liberation Sans", Arial, sans-serif; padding: 0 3px 2px 0; }
.cap span { flex: 1; text-align: center; }
.dr { width: 8px; height: 8px; }

/* toolbar */
.toolbar { height: 37px; flex: none; display: flex; align-items: center; margin: 0 2px 0 2px; padding: 0 5px 1px 3px; background: linear-gradient(#fdfdfd, #f7f7f7 70%, #f0f0f0); }
.tb { flex: none; display: block; }
.open { width: 26px; height: 28px; margin-right: 10px; }
.save { width: 28px; height: 28px; margin-right: 8px; }
.sep { width: 1px; height: 27px; background: #bdbdbd; }
.zoombox { width: 180px; height: 28px; margin: 0 6px 0 4px; padding: 0 5px 0 3px; display: flex; align-items: center; justify-content: space-between; background: #fff; border: 1px solid #6f6f6f; font-size: 14.5px; letter-spacing: -.2px; }
.zoombox svg { width: 10px; height: 6px; }
.fit { width: 28px; height: 28px; }
.arrow { border: 3px solid transparent; border-top: 4px solid #000; border-bottom: 0; }
.a1 { margin: 0 9px 0 8px; }
.eye { width: 28px; height: 20px; }
.a2 { margin: 0 7px 0 8px; }
.pen { width: 28px; height: 28px; }
.right-tools { margin-left: auto; display: flex; align-items: center; }
.right-tools .tb { width: 28px; height: 30px; }
.right-tools .p2 { margin: 0 4px 0 7px; }
.picked { width: 34px; height: 34px; border: 1px solid #0078d7; display: flex; align-items: center; justify-content: center; }
.s1 { margin: 0 10px 0 8px; }
.p5 { margin: 0 7px 0 5px; }
.s2 { margin: 0 4px 0 6px; }
.a3 { margin-left: 4px; }

/* canvas */
.canvas {
  height: 731px; flex: none; margin: 0 3px 0 2px; position: relative; overflow: hidden;
  box-shadow: -1px 0 #8a8a8a;
  --line: rgba(0,0,0,.13);
  background:
    repeating-linear-gradient(90deg, transparent 0 186.5px, var(--line) 186.5px 187.5px) -139px 0 / 2100px 731px,
    repeating-linear-gradient(transparent 0 61.5px, var(--line) 61.5px 62.5px) 0 -28px / 1920px 800px,
    #d4d0c8;
}
.page {
  --line: rgba(0,0,0,.055);
  width: 1891px; height: 655px; border: solid #b3b0a9; border-width: 0 1px 1px 0;
  background:
    repeating-linear-gradient(90deg, transparent 0 186.5px, var(--line) 186.5px 187.5px) -139px 0 / 2100px 731px,
    repeating-linear-gradient(transparent 0 61.5px, var(--line) 61.5px 62.5px) 0 -28px / 1920px 800px,
    #edece8;
}
.join-group { position: absolute; left: 200.5px; top: 84px; width: 1122.5px; height: 337px; background: rgba(253,249,57,.78); border: 1px solid rgba(110,110,60,.5); }
.join-group h1 { margin: 12.5px 0 0 52px; text-align: center; font: 400 32.6px/38px "Liberation Sans", Arial, sans-serif; letter-spacing: .3px; -webkit-text-stroke: .7px #000; }
.wires { position: absolute; left: 0; top: 0; }
.w-dark { fill: none; stroke: #000; stroke-width: 5.6; opacity: .6; }
.w-light { fill: none; stroke: url(#gWire); stroke-width: 1.5; }
.w-mid { fill: none; stroke: #9c9a96; stroke-width: 2; }
.heavy { stroke-width: 7; opacity: .75; }
.w-single { stroke: #000; stroke-width: 3.4; opacity: .6; }
.round { stroke-linecap: round; }

.panel { position: absolute; width: 567px; margin-left: -.5px; display: flex; align-items: center; justify-content: center; padding-right: 10px; border: 1.5px solid #4e4e3c; border-radius: 5px; }
.panel p { margin: 0; white-space: nowrap; text-align: center; font: 13.73px/15.3px "Liberation Mono", "Courier New", monospace; color: #1c4a1c; }
.panel::before, .panel::after, .node li::before {
  content: ""; position: absolute; width: 6px; height: 12px; top: calc(50% - 6px); left: -7px;
  background: #fff; border: 2px solid #000; border-right: 0; border-radius: 6px 0 0 6px;
}
.panel::after, .node .out li::before { left: auto; right: -7px; border: 2px solid #000; border-left: 0; border-radius: 0 6px 6px 0; }
.white { left: 504.5px; top: 141.5px; height: 52px; background: #fff; }
.yellow { left: 864.5px; top: 446.5px; height: 153px; background: #ff0; }

.node {
  position: absolute; display: grid; margin-left: -.5px; padding: 1.5px 0; border: 1.2px solid #37373d; border-radius: 4px;
  background: linear-gradient(#e6e6ea, #c4c3cc 9px, #adacb8 10px, #a3a2b0 14px, #8d8c99);
  box-shadow: 0 1px 1px rgba(0,0,0,.25), inset 0 1px rgba(255,255,255,.5);
  font: 12.7px "Noto Sans", "Open Sans", sans-serif;
}
.warn { border-color: #8b3d0c; background: linear-gradient(#ffe2bd, #ffbf72 9px, #ffa83a 10px, #ffa32e 14px, #ff8d14); }
.node ul { display: flex; flex-direction: column; }
.node li { flex: 1; min-height: 0; display: flex; align-items: center; justify-content: center; position: relative; padding-bottom: 1.5px; }
.node .in li { padding-left: 2px; }
.node .tagged li { padding-left: 22px; }
.node .out li { padding-right: 8px; }
.node .cmp li { justify-content: flex-start; padding-left: 6px; font-size: 11.5px; letter-spacing: 1.5px; }
.tg { position: absolute; left: 2.5px; top: calc(50% - 9.5px); width: 18px; height: 18px; }
.ni { width: 30px; height: 30px; align-self: center; overflow: visible; filter: drop-shadow(1px 1px 1px rgba(0,0,0,.25)); }
.inv { font: 700 10.5px "Liberation Mono", monospace; fill: #fff; }

.n1 { left: 213.3px; top: 254.5px; width: 100.5px; height: 55.5px; grid-template-columns: 41px 30px 1fr; }
.n2 { left: 355.7px; top: 310.5px; width: 79.5px; height: 35.5px; grid-template-columns: 26px 30px 1fr; }
.n3 { left: 455.7px; top: 313px; width: 112px; height: 55.5px; grid-template-columns: 43px 30px 1fr; }
.n4 { left: 604.5px; top: 206.5px; width: 82px; height: 55.5px; grid-template-columns: 25px 30px 1fr; }
.n5 { left: 608.5px; top: 266.7px; width: 78px; height: 55.5px; grid-template-columns: 21px 30px 1fr; }
.n6 { left: 709.5px; top: 253px; width: 90.5px; height: 80.5px; grid-template-columns: 32px 30px 1fr; }
.n7 { left: 827px; top: 278.5px; width: 102px; height: 55.5px; grid-template-columns: 44px 30px 1fr; }
.n8 { left: 949.5px; top: 290.5px; width: 102px; height: 105.5px; grid-template-columns: 43px 30px 1fr; }
.n9 { left: 1100.5px; top: 328px; width: 81px; height: 80.5px; grid-template-columns: 22px 30px 1fr; }
.n10 { left: 1226px; top: 303px; width: 84px; height: 80.5px; grid-template-columns: 24px 30px 1fr; }
.n11 { left: 1513px; top: 135.5px; width: 97px; height: 80.5px; grid-template-columns: 24px 30px 1fr; }
.n12 { left: 1636px; top: 135.5px; width: 91px; height: 55.5px; grid-template-columns: 32px 30px 1fr; }
.n13 { left: 1759.5px; top: 73px; width: 119.5px; height: 105.5px; grid-template-columns: 50px 30px 1fr; }
.n13 .in li { justify-content: flex-end; padding-right: 5px; }
.n13 .lt { font-size: 11px; }
.note { position: absolute; left: 1767px; top: 178.5px; width: 104.5px; height: 19.5px; background: #222; border-radius: 0 0 4px 4px; color: #f2f2f2; text-align: center; font: 13px/17.5px "Noto Sans", sans-serif; }
.stub { position: absolute; left: 0; bottom: 0; width: 9px; height: 35px; border: 1px solid #000; border-left: 0; background: linear-gradient(#ccc, #a6a6a6 12px, #7e7e7e 12px); }
.compass { position: absolute; left: 1836px; top: 664.5px; }

/* status bar */
.status { flex: 1; display: flex; align-items: center; border-top: 3px solid #fff; padding: 3px 43px 0 5px; box-shadow: inset 0 1px #d6d6d6; background: #f0f0f0; }
.info { width: 20px; height: 20px; margin-right: 4px; flex: none; }
.msg { font-size: 14.6px; letter-spacing: -.08px; white-space: nowrap; }
.ver { margin-left: auto; font-size: 14px; letter-spacing: -.3px; color: #7a7a7a; }
```
